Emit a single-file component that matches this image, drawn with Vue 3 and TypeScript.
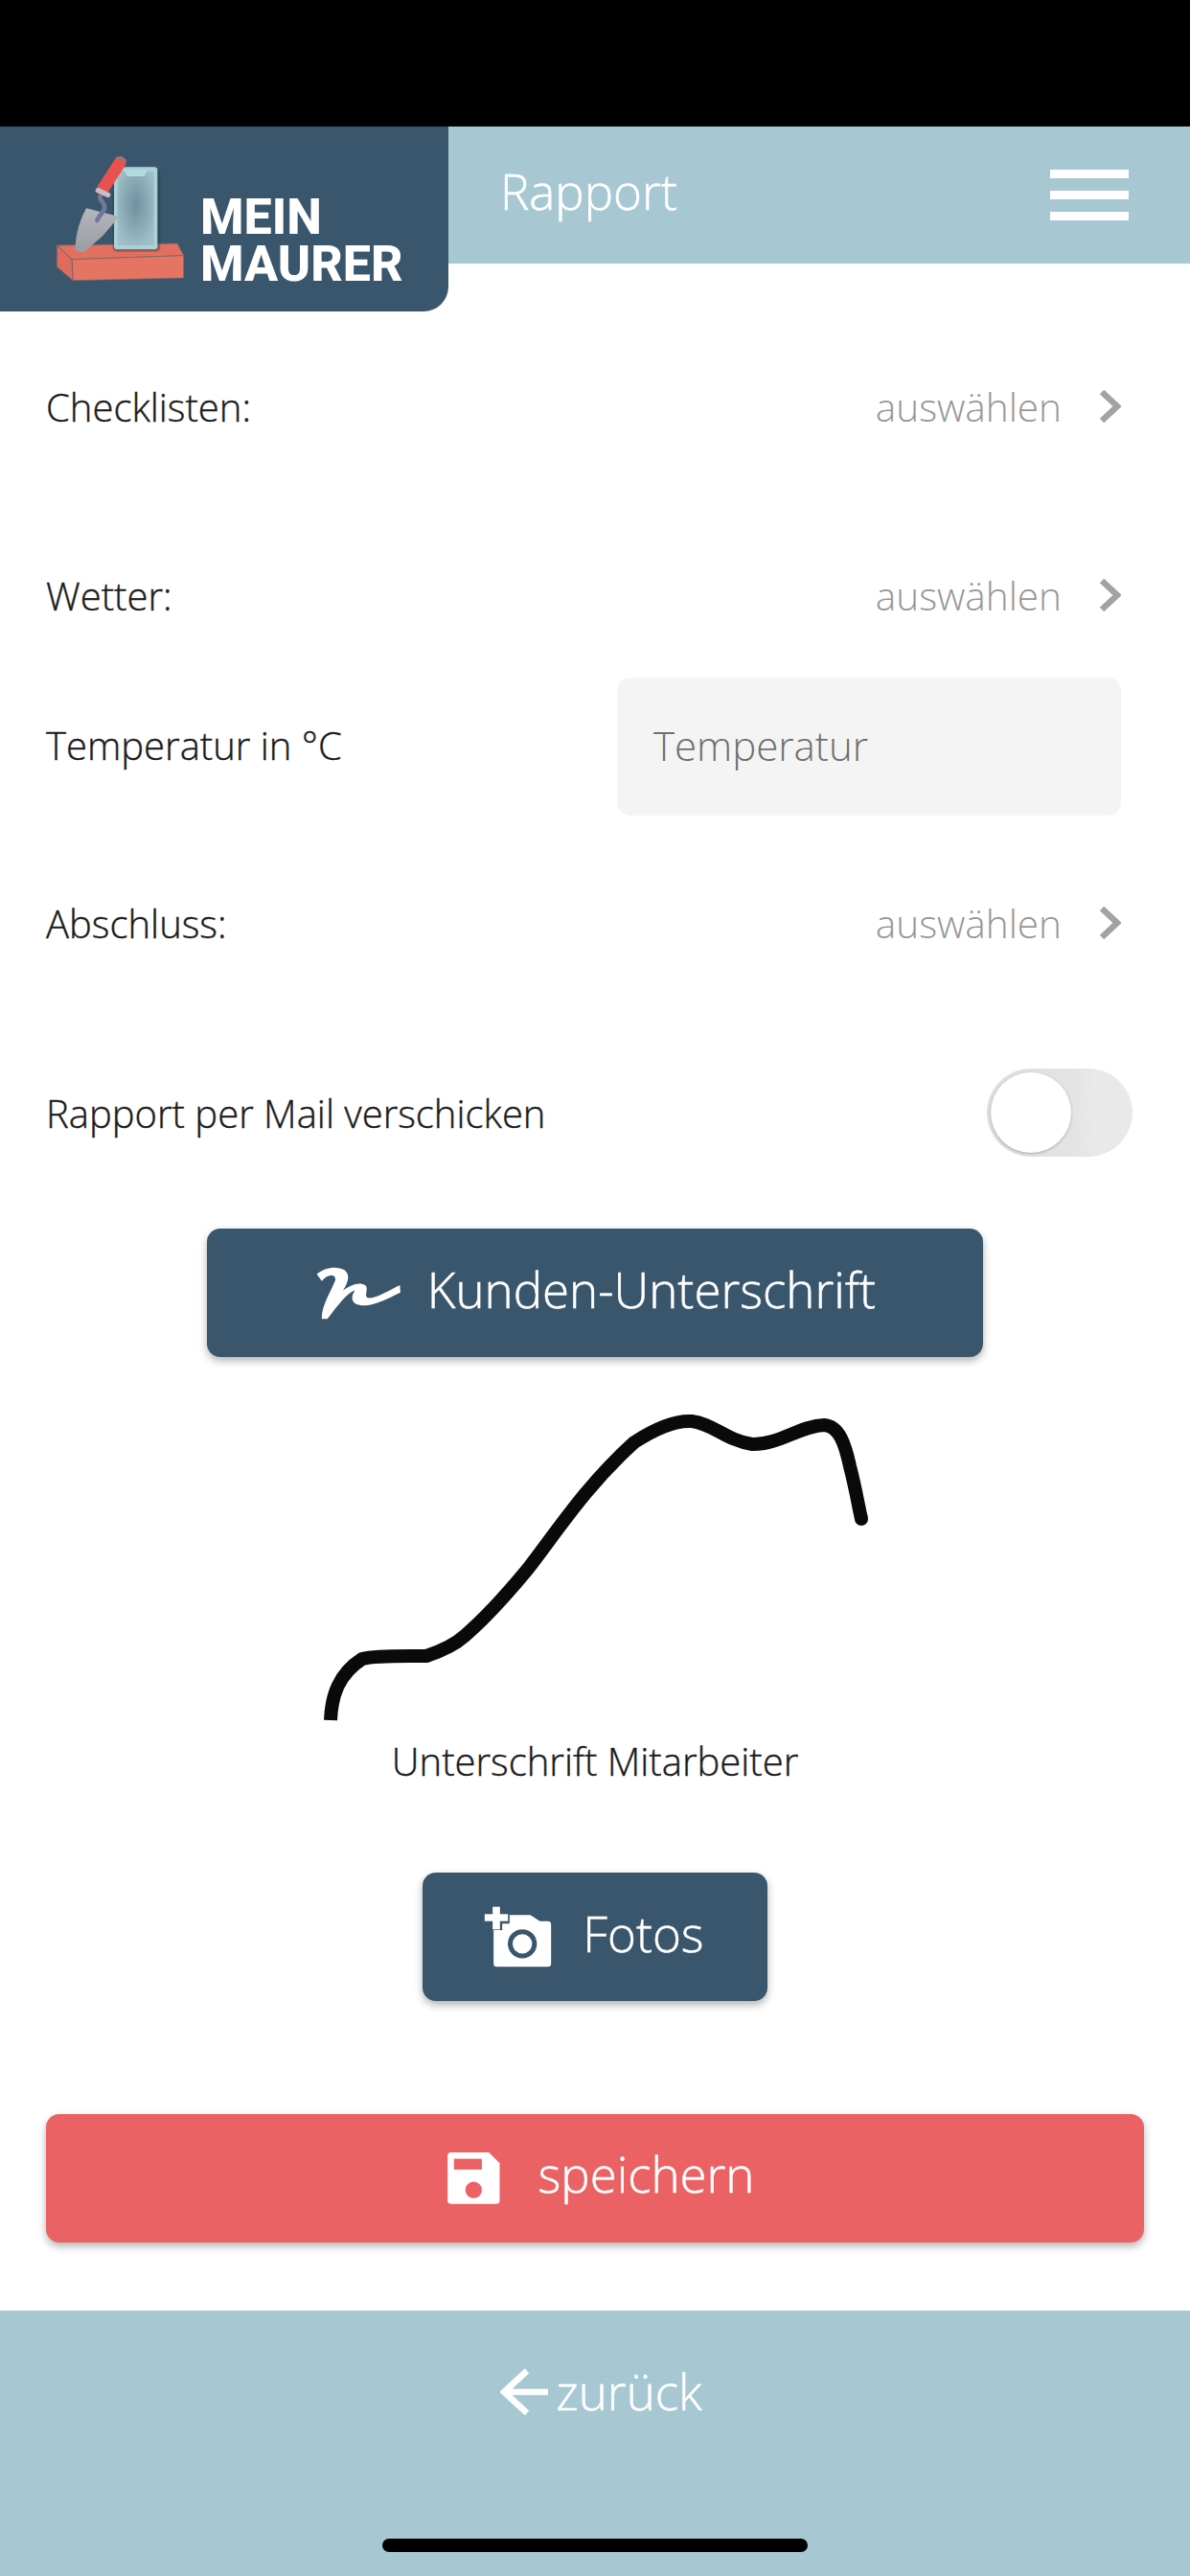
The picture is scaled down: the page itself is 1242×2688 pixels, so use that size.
<script setup lang="ts">
const title: string = 'Rapport'
</script>

<template>
  <div class="page">
    <div class="status"></div>
    <header class="header">
      <div class="logo">
        <svg class="logo-art" viewBox="0 0 540 510" width="180" height="170">
          <defs>
            <linearGradient id="blade" x1="0" y1="0" x2="0" y2="1">
              <stop offset="0" stop-color="#b5b6bb" />
              <stop offset="1" stop-color="#9a9ca6" />
            </linearGradient>
            <radialGradient id="screen" cx="50%" cy="45%" r="60%">
              <stop offset="0" stop-color="#6f909f" />
              <stop offset="1" stop-color="#9fc0c7" />
            </radialGradient>
          </defs>
          <polygon points="88,348 465,342 485,380 135,392" fill="#e2705e" stroke="#75666a" stroke-width="3" />
          <polygon points="135,392 485,380 485,450 138,458" fill="#e57562" stroke="#75666a" stroke-width="2" />
          <polygon points="88,348 135,392 138,458 88,415" fill="#df6c5a" stroke="#75666a" stroke-width="3" />
          <rect x="262" y="112" width="150" height="256" rx="14" fill="#1f3344" opacity="0.35" />
          <rect x="267" y="103" width="136" height="257" rx="10" fill="#a9d2d8" />
          <rect x="278" y="116" width="114" height="232" rx="8" fill="url(#screen)" />
          <path d="M298 112 H372 L362 132 H308 Z" fill="#b4dadd" />
          <path d="M180 232 L283 258 L232 318 L175 368 Q150 372 145 360 Q148 290 180 232 Z" fill="url(#blade)" />
          <path d="M231 186 C205 205 250 215 235 238 C228 250 218 258 214 270" fill="none" stroke="#72789a" stroke-width="14" stroke-linecap="round" />
          <path d="M232 172 L286 88" stroke="#e75250" stroke-width="38" stroke-linecap="round" />
          <path d="M272 76 Q290 68 304 84" fill="none" stroke="#7b7f8f" stroke-width="6" />
          <path d="M217 176 L248 190" stroke="#c9bccb" stroke-width="16" stroke-linecap="round" />
        </svg>
        <div class="brand">MEIN<br />MAURER</div>
      </div>
      <div class="title">{{ title }}</div>
      <div class="burger"><i></i><i></i><i></i></div>
    </header>

    <main class="content">
      <div class="row row-check">
        <span>Checklisten:</span>
        <span class="pick">auswählen
          <svg class="chev" viewBox="0 0 24 36" width="24" height="36"><path d="M4 3 L20 18 L4 33" fill="none" stroke="#a2a2a2" stroke-width="6.5" /></svg>
        </span>
      </div>
      <div class="row row-weather">
        <span>Wetter:</span>
        <span class="pick">auswählen
          <svg class="chev" viewBox="0 0 24 36" width="24" height="36"><path d="M4 3 L20 18 L4 33" fill="none" stroke="#a2a2a2" stroke-width="6.5" /></svg>
        </span>
      </div>
      <div class="row row-temp">
        <span class="temp-label">Temperatur in °C</span>
        <div class="input">Temperatur</div>
      </div>
      <div class="row row-end">
        <span>Abschluss:</span>
        <span class="pick">auswählen
          <svg class="chev" viewBox="0 0 24 36" width="24" height="36"><path d="M4 3 L20 18 L4 33" fill="none" stroke="#a2a2a2" stroke-width="6.5" /></svg>
        </span>
      </div>
      <div class="row row-mail">
        <span>Rapport per Mail verschicken</span>
        <div class="toggle"><div class="knob"></div></div>
      </div>

      <button class="btn btn-sign">
        <svg viewBox="230 185 175 170" width="92" height="57" preserveAspectRatio="none" class="sign-icon">
          <path d="M235 210 C250 190 275 183 290 198 C303 215 296 238 287 262 C300 245 320 233 331 245 C340 256 325 285 340 285 C355 285 380 260 400 245 L401 268 C375 287 350 310 325 308 C300 305 303 278 311 260 C295 270 280 300 256 350 L245 350 C243 310 265 260 272 228 C272 207 255 212 245 232 Z" fill="#fff" />
        </svg>
        <span>Kunden-Unterschrift</span>
      </button>

      <svg class="signature" viewBox="0 0 600 350" width="600" height="350">
        <path d="M25 345 C26 320 33 297 58 281 C73 277 108 278 125 278 C140 273 154 267 165 257 C188 237 212 210 231 187 C262 147 292 100 342 55 C365 40 385 32 402 33 C423 35 438 53 465 57 C492 58 515 38 540 37 C556 38 562 57 567 80 C573 103 575 117 579 135" fill="none" stroke="#0a0a0a" stroke-width="14" stroke-linejoin="round" />
        <circle cx="579" cy="135" r="7" fill="#0a0a0a" />
      </svg>
      <div class="sign-label">Unterschrift Mitarbeiter</div>

      <button class="btn btn-photo">
        <svg viewBox="250 175 212 192" width="71" height="64" class="photo-icon">
          <path d="M330 203 H395 L425 222 H450 Q460 222 460 232 V355 Q460 365 450 365 H290 Q280 365 280 355 V250 H307 V230 H330 Z" fill="#fff" />
          <rect x="252" y="200" width="73" height="22" fill="#fff" />
          <rect x="277" y="177" width="23" height="71" fill="#fff" />
          <circle cx="370" cy="293" r="38" fill="#fff" stroke="#3a566c" stroke-width="15" />
        </svg>
        <span>Fotos</span>
      </button>

      <button class="btn btn-save">
        <svg viewBox="198 170 165 163" width="55" height="54" class="save-icon">
          <path d="M208 170 H328 L362 204 V322 Q362 332 352 332 H208 Q198 332 198 322 V180 Q198 170 208 170 Z" fill="#fff" />
          <rect x="218" y="190" width="88" height="34" fill="#ea6264" />
          <circle cx="280" cy="288" r="26" fill="#ea6264" />
        </svg>
        <span>speichern</span>
      </button>
    </main>

    <footer class="footer">
      <div class="back">
        <svg viewBox="0 0 50 50" width="50" height="50">
          <path d="M28 4 L4 26 L28 48 M4 26 H50" fill="none" stroke="#fff" stroke-width="6.5" />
        </svg>
        <span>zurück</span>
      </div>
      <div class="home"></div>
    </footer>
  </div>
</template>

<style>
html, body { margin: 0; background: #fff; }
</style>

<style scoped>
.page {
  width: 1242px;
  height: 2688px;
  display: flex;
  flex-direction: column;
  font-family: "Open Sans", "Noto Sans", sans-serif;
  color: #1c1c1c;
  overflow: hidden;
  background: #fff;
}
.status { height: 132px; background: #000; flex: none; }
.header {
  height: 143px;
  flex: none;
  background: #a7c8d2;
  display: flex;
  align-items: flex-start;
}
.logo {
  width: 468px;
  height: 193px;
  flex: none;
  background: #3a566c;
  border-bottom-right-radius: 26px;
  position: relative;
  display: flex;
  align-items: flex-start;
  padding: 8px 0 0 30px;
  box-sizing: border-box;
}
.logo-art { flex: none; }
.brand {
  margin: 62px 0 0 -1px;
  font-family: Roboto, "Liberation Sans", sans-serif;
  font-weight: 800;
  font-size: 52px;
  line-height: 49px;
  color: #fff;
}
.title {
  margin: 35px 0 0 54px;
  font-size: 51px;
  line-height: 64px;
  font-weight: 300;
  -webkit-text-stroke: 0.5px #fff;
  color: #fff;
  flex: 1;
}
.burger {
  display: flex;
  flex-direction: column;
  gap: 13px;
  margin: 45px 64px 0 0;
  width: 82px;
}
.burger i { display: block; height: 9px; background: #fff; }
.content {
  flex: 1;
  display: flex;
  flex-direction: column;
  padding: 0 48px;
}
.row {
  display: flex;
  align-items: center;
  justify-content: space-between;
  font-size: 40px;
  font-weight: 300;
  -webkit-text-stroke: 0.4px #1c1c1c;
  flex: none;
}
.row-check { height: 100px; margin-top: 99px; }
.row-weather { height: 100px; margin-top: 97px; }
.row-temp { height: 144px; margin-top: 36px; margin-right: 24px; }
.temp-label { margin-bottom: 3px; }
.row-end { height: 100px; margin-top: 62px; }
.row-mail { height: 100px; margin-top: 98px; margin-right: 12px; }
.pick {
  display: inline-flex;
  align-items: center;
  color: #979797;
  -webkit-text-stroke: 0;
  gap: 38px;
  font-weight: 300;
  font-size: 40.5px;
  margin-right: 24px;
}
.input {
  width: 526px;
  height: 144px;
  background: #f4f4f4;
  border-radius: 14px;
  padding: 0 0 4px 38px;
  box-sizing: border-box;
  display: flex;
  align-items: center;
  color: #6f6f6f;
  -webkit-text-stroke: 0;
  font-size: 42px;
  font-weight: 300;
}
.toggle {
  width: 152px;
  height: 92px;
  border-radius: 46px;
  background: linear-gradient(90deg, #dedede 0, #e4e4e4 60%, #e9e9e9 75%);
  position: relative;
  flex: none;
}
.knob {
  width: 84px;
  height: 84px;
  border-radius: 50%;
  background: #fff;
  position: absolute;
  left: 4px;
  top: 4px;
  box-shadow: 0 1px 3px rgba(0, 0, 0, 0.25);
}
.btn {
  flex: none;
  border: 0;
  display: flex;
  align-items: center;
  justify-content: center;
  height: 134px;
  background: #3a566c;
  color: #fff;
  font-family: inherit;
  font-size: 51px;
  font-weight: 300;
  -webkit-text-stroke: 0.5px #fff;
  border-radius: 14px;
  box-shadow: 0 4px 8px rgba(0, 0, 0, 0.3);
  padding: 0;
}
.btn span { margin-top: -8px; }
.btn-sign { width: 810px; margin: 71px 0 0 168px; gap: 26px; }
.signature { flex: none; margin: 34px 0 0 272px; }
.sign-label {
  text-align: center;
  font-size: 40px;
  font-weight: 300;
  -webkit-text-stroke: 0.4px #1c1c1c;
  line-height: 46px;
  margin-top: 15px;
}
.btn-photo { width: 360px; margin: 93px 0 0 393px; gap: 32px; padding-right: 2px; }
.btn-save {
  width: 1146px;
  margin-top: 118px;
  background: #ea6264;
  gap: 40px;
  padding-left: 12px;
}
.btn-save span { margin-top: -10px; }
.footer {
  height: 277px;
  flex: none;
  background: #a7c8d2;
  position: relative;
  display: flex;
  justify-content: center;
  padding-left: 13px;
}
.back {
  display: flex;
  align-items: center;
  gap: 8px;
  height: 60px;
  margin-top: 54px;
  color: #fff;
  font-size: 51px;
  font-weight: 300;
  -webkit-text-stroke: 0.5px #fff;
}
.home {
  position: absolute;
  left: 399px;
  top: 238px;
  width: 444px;
  height: 14px;
  border-radius: 7px;
  background: #000;
}
</style>
